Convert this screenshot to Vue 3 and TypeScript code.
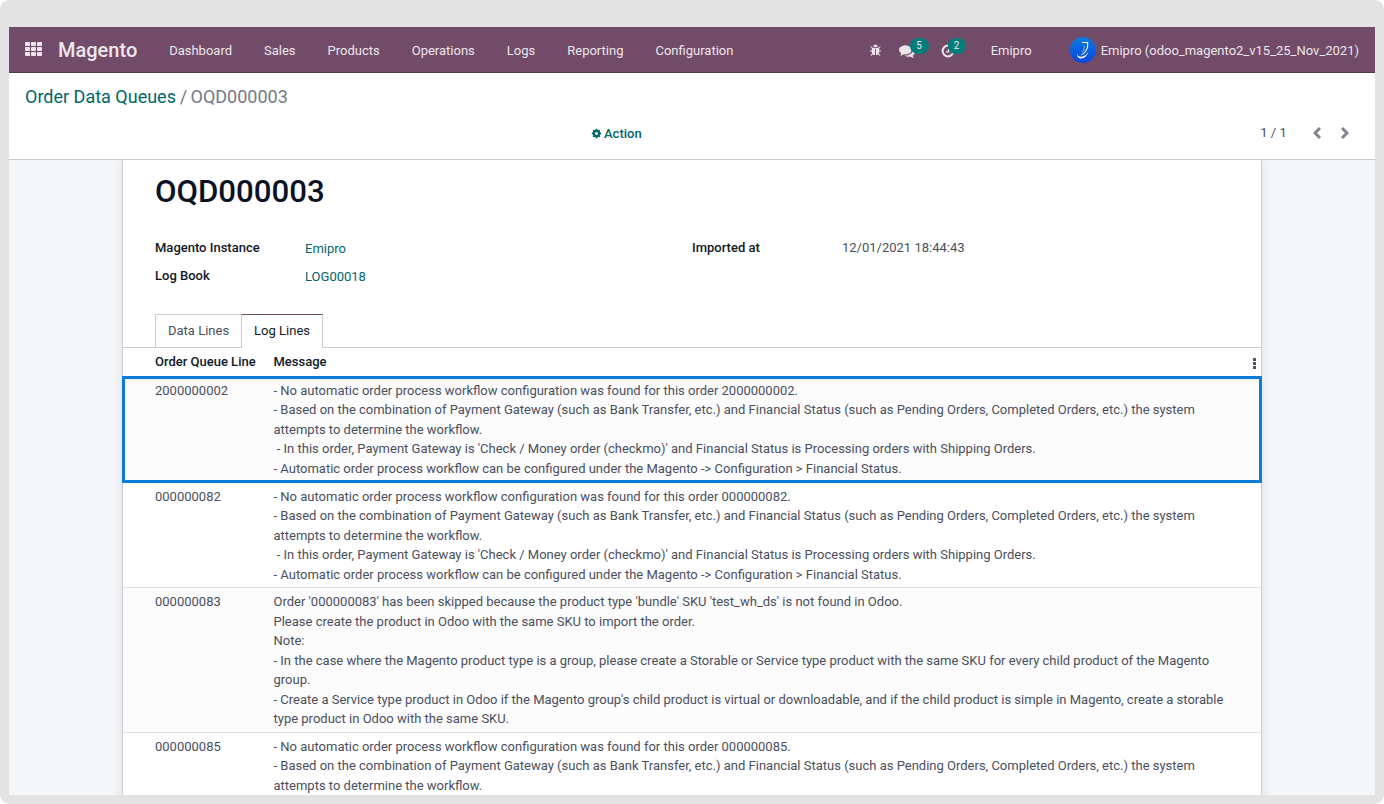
<script setup lang="ts">
interface LogLine {
  id: string
  message: string
  kind?: string
}

const menus: string[] = ['Dashboard', 'Sales', 'Products', 'Operations', 'Logs', 'Reporting', 'Configuration']

const workflowMessage = (order: string): string =>
  `- No automatic order process workflow configuration was found for this order ${order}.
- Based on the combination of Payment Gateway (such as Bank Transfer, etc.) and Financial Status (such as Pending Orders, Completed Orders, etc.) the system attempts to determine the workflow.
 - In this order, Payment Gateway is 'Check / Money order (checkmo)' and Financial Status is Processing orders with Shipping Orders.
- Automatic order process workflow can be configured under the Magento -> Configuration > Financial Status.`

const lines: LogLine[] = [
  { id: '2000000002', message: workflowMessage('2000000002'), kind: 'selected' },
  { id: '000000082', message: workflowMessage('000000082'), kind: 'after-selected' },
  {
    id: '000000083',
    message: `Order '000000083' has been skipped because the product type 'bundle' SKU 'test_wh_ds' is not found in Odoo.
Please create the product in Odoo with the same SKU to import the order.
Note:
- In the case where the Magento product type is a group, please create a Storable or Service type product with the same SKU for every child product of the Magento group.
- Create a Service type product in Odoo if the Magento group's child product is virtual or downloadable, and if the child product is simple in Magento, create a storable type product in Odoo with the same SKU.`,
    kind: 'skipped',
  },
  { id: '000000085', message: workflowMessage('000000085') },
]
</script>

<template>
  <div class="frame">
    <div class="app">
      <header class="navbar">
        <svg class="apps" viewBox="0 0 17 14" width="17" height="14">
          <template v-for="r in 3" :key="r">
            <rect v-for="c in 3" :key="c" :x="(c - 1) * 6" :y="(r - 1) * 5" width="5" height="4" rx="0.7" />
          </template>
        </svg>
        <span class="brand">Magento</span>
        <nav class="menus">
          <a v-for="m in menus" :key="m">{{ m }}</a>
        </nav>
        <div class="systray">
          <svg class="bug" viewBox="0 0 1792 1792" width="13" height="13">
            <path d="M1696 960q0 26-19 45t-45 19h-224q0 171-67 290l208 209q19 19 19 45t-19 45q-18 19-45 19t-45-19l-198-197q-5 5-15 13t-42 28.5-65 36.5-82 29-97 13v-896h-128v896q-51 0-101.5-13.5t-87-33-66-39-43.5-32.5l-15-14-183 207q-20 21-48 21-24 0-43-16-19-18-20.5-44.5t15.5-46.5l202-227q-58-114-58-274h-224q-26 0-45-19t-19-45 19-45 45-19h224v-294l-173-173q-19-19-19-45t19-45 45-19 45 19l173 173h844l173-173q19-19 45-19t45 19 19 45-19 45l-173 173v294h224q26 0 45 19t19 45zm-480-576h-640q0-133 93.5-226.5t226.5-93.5 226.5 93.5 93.5 226.5z" />
          </svg>
          <span class="tray chat">
            <svg viewBox="0 0 1792 1792" width="16" height="16">
              <path d="M1408 768q0 139-94 257t-256.5 186.5-353.5 68.5q-86 0-176-16-124 88-278 128-36 9-86 16h-3q-11 0-20.5-8t-11.5-21q-1-3-1-6.5t.5-6.5 2-6l2.5-5 3.5-5.5 4-5 4.5-5 4-4.5q5-6 23-25t26-29.5 22.5-29 25-38.5 20.5-44q-124-72-195-177t-71-224q0-139 94-257t256.5-186.5 353.5-68.5 353.5 68.5 256.5 186.5 94 257zm384 256q0 120-71 224.5t-195 176.5q10 24 20.5 44t25 38.5 22.5 29 26 29.5 23 25q1 1 4 4.5t4.5 5 4 5 3.5 5.5l2.5 5 2 6 .5 6.5-1 6.5q-3 14-13 22t-22 7q-50-7-86-16-154-40-278-128-90 16-176 16-271 0-472-132 58 4 88 4 161 0 309-45t264-129q125-92 192-212t67-254q0-77-23-152 129 71 204 178t75 230z" />
            </svg>
            <b class="badge">5</b>
          </span>
          <span class="tray clock">
            <svg viewBox="0 0 14 14" width="14" height="14">
              <path d="M7 1.6A5.4 5.4 0 1 0 12.4 7" fill="none" stroke="currentColor" stroke-width="2" />
              <path d="M6.8 5h1.5v3.6H5V7.3h1.8z" />
            </svg>
            <b class="badge">2</b>
          </span>
          <span class="company">Emipro</span>
          <svg class="avatar" viewBox="0 0 26 26" width="26" height="26">
            <defs>
              <linearGradient id="avatarFill" x1="0" y1="0" x2="0" y2="1">
                <stop offset="0" stop-color="#0a7be0" />
                <stop offset="1" stop-color="#0846dc" />
              </linearGradient>
            </defs>
            <circle cx="13" cy="13" r="13" fill="url(#avatarFill)" />
            <path d="M12 5.5h5.7q.5 5-1.5 8-1.7 2.6-4.7 4.4" fill="none" stroke="#fff" stroke-width="1.1" />
            <path d="M7.3 15.8q-.4 3.4 3.2 4 4.5.2 8.3-5.3-2.6 6.7-8 6.9-4.6-.3-3.5-5.6z" fill="#fff" />
            <path d="M14.3 8.5q.4 3.5-1.6 6.5" fill="none" stroke="#fff" stroke-width="0.5" />
          </svg>
          <span class="user">Emipro (odoo_magento2_v15_25_Nov_2021)</span>
        </div>
      </header>

      <section class="control">
        <div class="crumbs"><a>Order Data Queues</a><span class="sep"> / </span><span>OQD000003</span></div>
        <div class="tools">
          <button class="action" type="button">
            <svg viewBox="0 0 1792 1792" width="11" height="11">
              <path d="M1152 896q0-106-75-181t-181-75-181 75-75 181 75 181 181 75 181-75 75-181zm512-109v222q0 12-8 23t-20 13l-185 28q-19 54-39 91 35 50 107 138 10 12 10 25t-9 23q-27 37-99 108t-94 71q-12 0-26-9l-138-108q-44 23-91 38-16 136-29 186-7 28-36 28h-222q-14 0-24.5-8.5t-11.5-21.5l-28-184q-49-16-90-37l-141 107q-10 9-25 9-14 0-25-11-126-114-165-168-7-10-7-23 0-12 8-23 15-21 51-66.5t54-70.5q-27-50-41-99l-183-27q-13-2-21-12.5t-8-23.5v-222q0-12 8-23t19-13l186-28q14-46 39-92-40-57-107-138-10-12-10-24 0-10 9-23 26-36 98.5-107.5t94.5-71.5q13 0 26 10l138 107q44-23 91-38 16-136 29-186 7-28 36-28h222q14 0 24.5 8.5t11.5 21.5l28 184q49 16 90 37l142-107q9-9 24-9 13 0 25 10 129 119 165 170 7 8 7 22 0 12-8 23-15 21-51 66.5t-54 70.5q26 50 41 98l183 28q13 2 21 12.5t8 23.5z" />
            </svg>
            <span>Action</span>
          </button>
          <div class="pager">
            <span class="count">1 / 1</span>
            <svg viewBox="0 0 8 12" width="8" height="12"><path d="M7 1L2 6l5 5" /></svg>
            <svg viewBox="0 0 8 12" width="8" height="12"><path d="M1 1l5 5-5 5" /></svg>
          </div>
        </div>
      </section>

      <main class="content">
        <article class="sheet">
          <h1>OQD000003</h1>
          <div class="fields">
            <dl>
              <dt>Magento Instance</dt>
              <dd class="link">Emipro</dd>
              <dt>Log Book</dt>
              <dd class="link">LOG00018</dd>
            </dl>
            <dl>
              <dt>Imported at</dt>
              <dd>12/01/2021 18:44:43</dd>
            </dl>
          </div>
          <div class="tabs">
            <a class="tab">Data Lines</a>
            <a class="tab active">Log Lines</a>
          </div>
          <div class="row head">
            <span>Order Queue Line</span>
            <span>Message</span>
            <svg class="dots" viewBox="0 0 3 11" width="3" height="11">
              <rect width="3" height="3" rx="0.6" />
              <rect y="4" width="3" height="3" rx="0.6" />
              <rect y="8" width="3" height="3" rx="0.6" />
            </svg>
          </div>
          <div v-for="line in lines" :key="line.id" class="row line" :class="line.kind">
            <span>{{ line.id }}</span>
            <span class="message">{{ line.message }}</span>
          </div>
        </article>
      </main>
    </div>
  </div>
</template>

<style>
body {
  margin: 0;
  background: #fff;
}
</style>

<style scoped>
.frame {
  box-sizing: border-box;
  width: 1384px;
  height: 804px;
  padding: 27px 9px 9px;
  background: #e3e3e3;
  border-radius: 9px;
  font: 13px/19.5px Roboto, sans-serif;
  color: #4a4f5e;
}
.app {
  display: flex;
  flex-direction: column;
  height: 768px;
  overflow: hidden;
  background: #f5f6fa;
}
.navbar {
  box-sizing: border-box;
  flex: none;
  display: flex;
  align-items: center;
  height: 46px;
  padding: 0 16px;
  background: #714b67;
  border-bottom: 1px solid #5a3850;
  color: #eee6ec;
  white-space: nowrap;
}
.navbar svg {
  fill: currentColor;
  flex: none;
}
.apps {
  margin-bottom: 1px;
}
.brand {
  margin-left: 16px;
  font-size: 20px;
  font-weight: 500;
  line-height: 46px;
}
.menus {
  display: flex;
  gap: 32px;
  margin: 2px 0 0 31.9px;
}
.systray {
  display: flex;
  align-items: center;
  margin: 2px 0 0 auto;
}
.tray {
  position: relative;
  display: flex;
}
.chat {
  margin-left: 17px;
}
.clock {
  margin-left: 26px;
}
.badge {
  position: absolute;
  left: 11px;
  top: -5px;
  width: 19px;
  height: 16px;
  border-radius: 8px;
  background: #017e7c;
  font-size: 10px;
  font-weight: 400;
  line-height: 16px;
  text-align: center;
}
.clock .badge {
  left: 7px;
  top: -6px;
  width: 18px;
}
.company {
  margin-left: 36px;
}
.avatar {
  margin: 0 5px 1px 38px;
}
.control {
  box-sizing: border-box;
  flex: none;
  height: 87px;
  padding: 10px 16px 0;
  background: #fff;
  border-bottom: 1px solid #c9ccd2;
}
.crumbs {
  font-size: 18px;
  line-height: 28px;
  color: #74798a;
  white-space: pre;
}
.crumbs a {
  color: #01666b;
}
.sep {
  letter-spacing: -0.6px;
}
.tools {
  display: flex;
  justify-content: flex-end;
  align-items: center;
  height: 44px;
}
.action {
  display: flex;
  align-items: center;
  gap: 2px;
  margin: 1px auto 0 566px;
  padding: 0;
  border: 0;
  background: none;
  font: 500 13px/21px Roboto, sans-serif;
  color: #01666b;
}
.action svg {
  fill: currentColor;
}
.pager {
  display: flex;
  align-items: center;
  margin-right: 10.3px;
}
.pager svg {
  fill: none;
  stroke: #80858f;
  stroke-width: 3;
}
.count {
  margin-right: 26px;
}
.pager svg + svg {
  margin-left: 20px;
}
.content {
  flex: 1;
  min-height: 0;
  overflow: hidden;
}
.sheet {
  box-sizing: border-box;
  width: 1140px;
  height: 760px;
  margin: 0 auto;
  padding-top: 13px;
  background: #fff;
  border: solid #c9ccd2;
  border-width: 0 1px;
  box-shadow: 0 0 14px -4px rgba(40, 50, 80, 0.22);
}
h1 {
  margin: 0 0 27px 32px;
  font-size: 31.2px;
  font-weight: 500;
  line-height: 38px;
  color: #0b1226;
}
.fields {
  display: flex;
  padding-left: 32px;
}
dl {
  display: grid;
  grid-template-columns: 150px 1fr;
  grid-auto-rows: 28px;
  align-content: start;
  width: 537px;
  height: 76px;
  margin: 0;
}
dt {
  font-weight: 500;
  color: #111827;
}
dd {
  margin: 0;
}
.link {
  padding-top: 1px;
  color: #01666b;
}
.tabs {
  display: flex;
  height: 33px;
  padding-left: 32px;
  border-bottom: 1px solid #c9ccd2;
}
.tab {
  box-sizing: border-box;
  height: 33px;
  padding: 6px 12px 0;
  border: 1px solid #c9ccd2;
  border-width: 1px 0 0 1px;
}
.tab.active {
  height: 34px;
  border-width: 1px 1px 0;
  border-top-color: #714b67;
  background: #fff;
  color: #111827;
}
.row {
  display: grid;
  grid-template-columns: 118.5px 958px 1fr;
  padding-left: 32px;
}
.head {
  box-sizing: border-box;
  height: 28px;
  padding-top: 4px;
  font-weight: 500;
  color: #111827;
}
.dots {
  justify-self: end;
  margin: 6px 5px 0 0;
  fill: #4a4f5e;
}
.line {
  padding-top: 4px;
  padding-bottom: 3.2px;
  border-bottom: 1px solid #dddfe3;
}
.line:nth-child(odd) {
  background: #fcfcfc;
}
.message {
  white-space: pre-wrap;
}
.line.selected {
  position: relative;
  padding-top: 4.6px;
  padding-bottom: 3.7px;
  box-shadow: inset 0 7px 8px -5px rgba(0, 0, 0, 0.08);
}
.line.after-selected {
  padding-bottom: 2.4px;
}
.line.skipped {
  padding-top: 4.5px;
  padding-bottom: 3px;
}
.selected::after {
  content: '';
  position: absolute;
  inset: 0 -1px -1px;
  border: 3px solid #0a7cd8;
}
</style>
